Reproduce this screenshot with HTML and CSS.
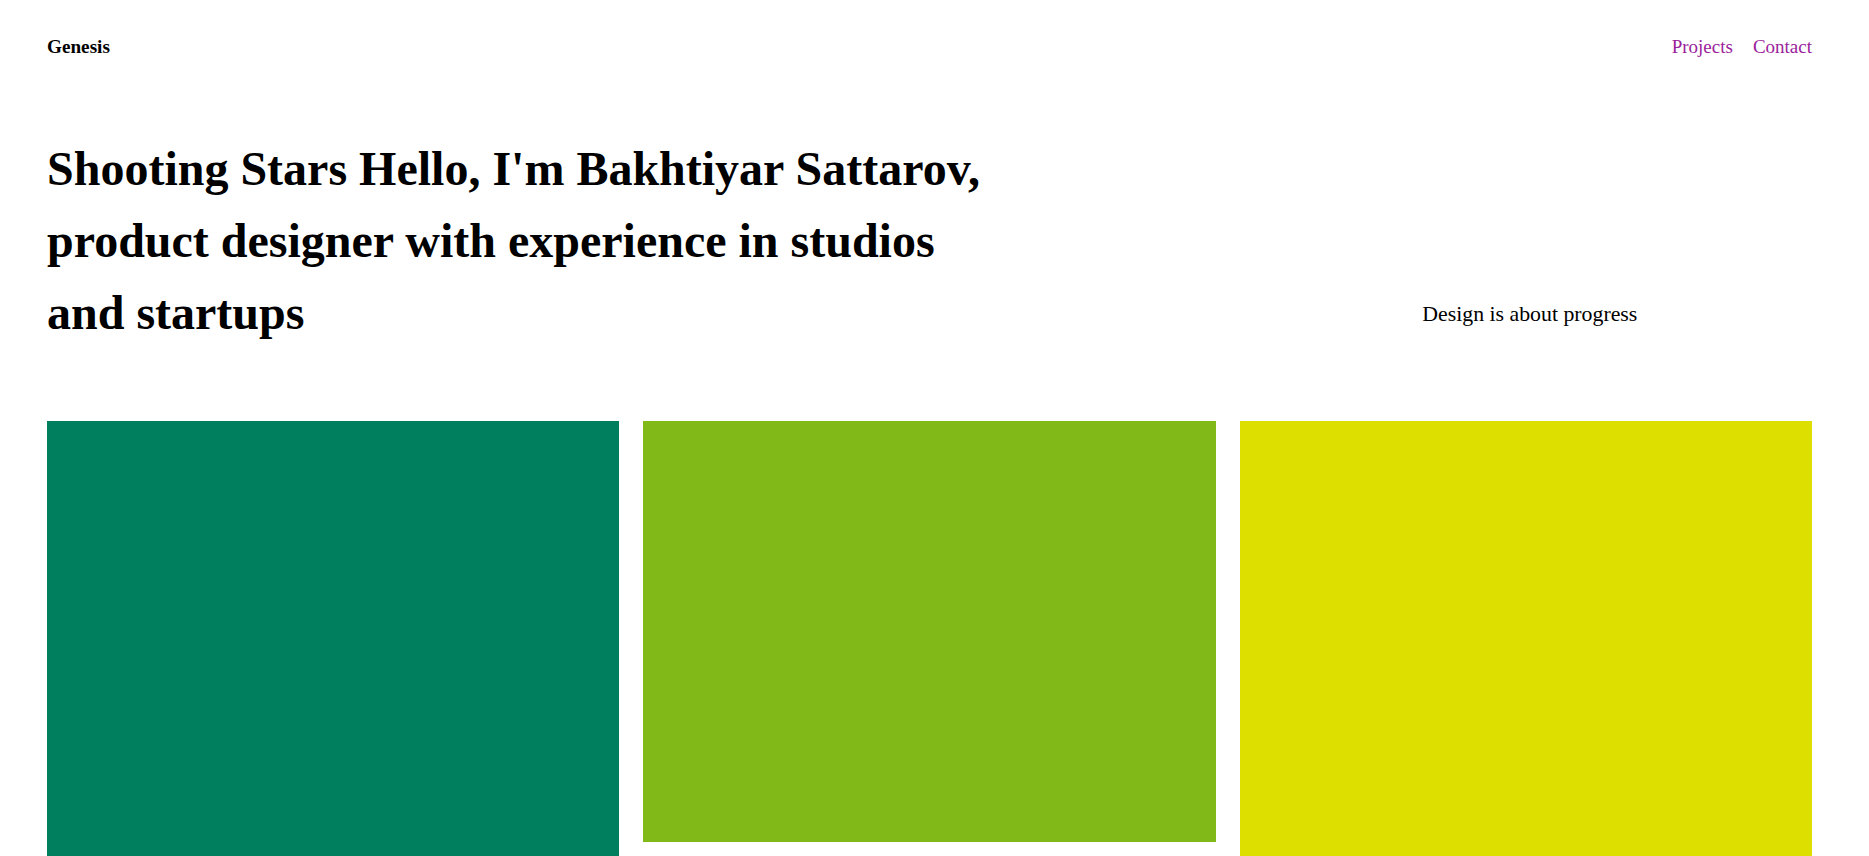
FILE: index.html
```html
<!DOCTYPE html>
<html lang="en">
<head>
<meta charset="utf-8">
<title>Genesis</title>
<link rel="stylesheet" href="styles.css">
</head>
<body>
<div class="page">
  <header class="header">
    <div class="logo">Genesis</div>
    <nav class="nav">
      <a href="#projects" class="nav-link">Projects</a>
      <a href="#contact" class="nav-link">Contact</a>
    </nav>
  </header>
  <section class="hero">
    <h1 class="hero-title">Shooting Stars Hello, I'm Bakhtiyar Sattarov, product designer with experience in studios and startups</h1>
    <p class="hero-tagline">Design is about progress</p>
  </section>
  <section class="projects" id="projects">
    <div class="card card-green"></div>
    <div class="card card-lime"></div>
    <div class="card card-yellow"></div>
  </section>
</div>
</body>
</html>
```

FILE: styles.css
```css
html, body {
  margin: 0;
  padding: 0;
  background: #ffffff;
}

body {
  font-family: "Liberation Serif", "Times New Roman", serif;
  color: #000000;
}

.page {
  padding: 0 57px 0 47px;
}

.header {
  display: flex;
  justify-content: space-between;
  align-items: baseline;
  padding-top: 36px;
}

.logo {
  font-weight: bold;
  font-size: 19.2px;
  line-height: 1.15;
}

.nav {
  display: flex;
  gap: 20px;
}

.nav-link {
  font-size: 19px;
  line-height: 1.15;
  color: #9a229a;
  text-decoration: none;
}

.hero {
  display: grid;
  grid-template-columns: 2fr 1fr;
  column-gap: 24px;
  align-items: end;
  margin-top: 75px;
}

.hero-title {
  margin: 0;
  max-width: 950px;
  font-size: 48px;
  line-height: 72px;
  font-weight: bold;
}

.hero-tagline {
  margin: 0 0 22.5px;
  padding-left: 16px;
  font-size: 21.8px;
  text-align: center;
}

.projects {
  display: grid;
  grid-template-columns: repeat(3, 1fr);
  gap: 24px;
  align-items: start;
  margin-top: 72px;
}

.card {
  height: 572px;
}

.card-green {
  background: #007f5f;
}

.card-lime {
  background: #80b918;
  height: 421px;
}

.card-yellow {
  background: #dddf00;
}
```
